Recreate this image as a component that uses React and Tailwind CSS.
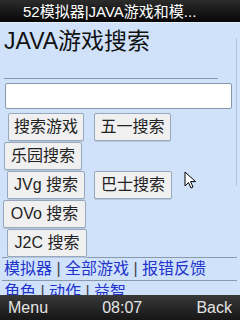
import React from "react";

const font = { fontFamily: '"Liberation Sans", "Noto Sans CJK SC", sans-serif' };

const Btn = ({ label, w, ml }) => (
  <button
    className={`h-[28px] ${w} ${ml} rounded-[2px] border border-[#98a8bc] bg-[#f0f0f0] text-[16px] leading-none text-[#222] shadow-[0_1px_0_#b8c8dc]`}
  >
    {label}
  </button>
);

const Cursor = () => (
  <svg width="13" height="19" viewBox="0 0 13 19" className="absolute left-[184px] top-[148px]">
    <path
      d="M1 1 L1 15 L4.5 11.5 L7 17 L9 16 L6.6 10.6 L11.5 10.6 Z"
      fill="#fff"
      stroke="#000"
      strokeWidth="1"
      strokeLinejoin="round"
    />
  </svg>
);

export default function App() {
  return (
    <div className="relative flex h-[320px] w-[240px] flex-col overflow-hidden" style={font}>
      {/* title bar */}
      <div className="flex h-[22px] shrink-0 items-center bg-gradient-to-b from-[#2c2c2c] to-[#080808] pl-[23px]">
        <span className="whitespace-nowrap text-[15px] leading-none text-white">52模拟器|JAVA游戏和模...</span>
      </div>
      <div className="h-[1px] shrink-0 bg-[#e6f0fc]" />

      {/* page */}
      <div className="relative flex-1 overflow-hidden bg-[#cfe2fa]">
        <h1 className="ml-[4px] mt-[5px] h-[26px] text-[23px] leading-[26px] text-[#111]">JAVA游戏搜索</h1>
        <div className="ml-[4px] mt-[24px] w-[214px] border-t border-[#8a9aae]" />
        <div className="ml-[5px] mt-[4px] h-[26px] w-[227px] rounded-[2px] border border-[#8898ac] bg-white" />

        <div className="mt-[4px] flex flex-col gap-[1px]">
          <div className="flex">
            <Btn label="搜索游戏" w="w-[76px]" ml="ml-[8px]" />
            <Btn label="五一搜索" w="w-[77px]" ml="ml-[10px]" />
          </div>
          <div className="flex">
            <Btn label="乐园搜索" w="w-[78px]" ml="ml-[4px]" />
          </div>
          <div className="flex">
            <Btn label="JVg 搜索" w="w-[78px]" ml="ml-[7px]" />
            <Btn label="巴士搜索" w="w-[78px]" ml="ml-[9px]" />
          </div>
          <div className="flex">
            <Btn label="OVo 搜索" w="w-[83px]" ml="ml-[3px]" />
          </div>
          <div className="flex">
            <Btn label="J2C 搜索" w="w-[80px]" ml="ml-[7px]" />
          </div>
        </div>

        <div className="ml-[2px] w-[235px] border-t border-[#8a9aae]" />
        <div className="ml-[4px] h-[22px] whitespace-nowrap text-[16px] leading-[22px] text-[#2233cc]">
          模拟器 <span className="text-[#444]">|</span> 全部游戏 <span className="text-[#444]">|</span> 报错反馈
        </div>
        <div className="ml-[2px] w-[235px] border-t border-[#8a9aae]" />
        <div className="ml-[4px] h-[22px] whitespace-nowrap text-[16px] leading-[22px] text-[#2233cc]">
          角色 <span className="text-[#444]">|</span> 动作 <span className="text-[#444]">|</span> 益智
        </div>

        {/* scrollbar */}
        <div className="absolute left-[236px] top-[15px] h-[148px] w-[1px] bg-[#b4c4d8]" />
        <Cursor />
      </div>

      {/* soft keys */}
      <div className="flex h-[25px] shrink-0 items-center justify-between bg-gradient-to-b from-[#3a3a3a] to-[#161616] px-[8px] text-[16px] leading-none text-[#e4e4e4]">
        <span>Menu</span>
        <span>08:07</span>
        <span>Back</span>
      </div>
    </div>
  );
}
